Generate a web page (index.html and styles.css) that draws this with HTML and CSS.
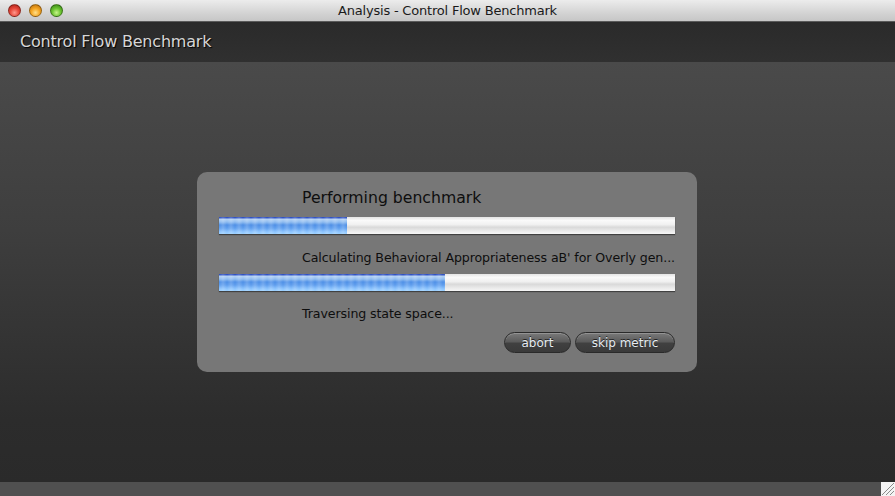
FILE: index.html
```html
<!DOCTYPE html>
<html>
<head>
<meta charset="utf-8">
<link rel="stylesheet" href="styles.css">
</head>
<body>
<div class="window">
  <div class="titlebar">
    <div class="lights">
      <span class="light red"></span>
      <span class="light orange"></span>
      <span class="light green"></span>
    </div>
    <div class="title">Analysis - Control Flow Benchmark</div>
  </div>
  <div class="header">Control Flow Benchmark</div>
  <div class="main">
    <div class="dialog">
      <div class="dlg-title">Performing benchmark</div>
      <div class="bar"><div class="fill" style="width:28%"></div></div>
      <div class="msg">Calculating Behavioral Appropriateness aB' for Overly gen...</div>
      <div class="bar"><div class="fill" style="width:49.6%"></div></div>
      <div class="msg msg2">Traversing state space...</div>
      <div class="buttons">
        <button class="btn btn-abort">abort</button>
        <button class="btn btn-skip">skip metric</button>
      </div>
    </div>
  </div>
  <div class="statusbar">
    <div class="grip">
      <svg width="14" height="14" viewBox="0 0 14 14">
        <path d="M13 5 L5 13 M13 9 L9 13 M13 1 L1 13" stroke="#8a8a8a" stroke-width="1" fill="none"/>
      </svg>
    </div>
  </div>
</div>
</body>
</html>
```
FILE: styles.css
```css
* { box-sizing: border-box; }
html, body { margin: 0; padding: 0; }
body {
  width: 895px;
  height: 496px;
  overflow: hidden;
  font-family: "DejaVu Sans", "Lucida Grande", sans-serif;
}
.window {
  display: flex;
  flex-direction: column;
  width: 895px;
  height: 496px;
}
.titlebar {
  height: 22px;
  flex: none;
  background: linear-gradient(#ececec, #d4d4d4 60%, #c6c6c6);
  border-bottom: 1px solid #5a5a5a;
  display: flex;
  align-items: center;
  position: relative;
}
.lights {
  display: flex;
  gap: 8px;
  padding-left: 8px;
  align-items: center;
}
.light {
  width: 13px;
  height: 13px;
  border-radius: 50%;
  display: block;
  border: 1px solid rgba(0,0,0,0.35);
}
.red { background: radial-gradient(circle at 50% 70%, #ff9a8e 0%, #e84a3c 45%, #a81c12 100%); }
.orange { background: radial-gradient(circle at 50% 70%, #ffe08a 0%, #f5a623 45%, #b86a08 100%); }
.green { background: radial-gradient(circle at 50% 70%, #c8f58a 0%, #6cc431 45%, #2f7c10 100%); }
.title {
  position: absolute;
  left: 0;
  right: 0;
  top: 0;
  height: 21px;
  line-height: 22px;
  text-align: center;
  font-size: 13px;
  color: #1a1a1a;
  letter-spacing: -0.2px;
}
.header {
  height: 40px;
  flex: none;
  background: linear-gradient(#2a2a2a, #303030);
  color: #d6d6d6;
  font-size: 16px;
  line-height: 40px;
  padding-left: 20px;
  text-shadow: 1px 1px 1px #000;
  letter-spacing: -0.2px;
}
.main {
  flex: 1;
  background: linear-gradient(#4a4a4a, #3e3e3e 40%, #2c2c2c 85%, #2a2a2a);
  display: flex;
  align-items: center;
  justify-content: flex-start;
  padding-left: 197px;
}
.dialog {
  width: 500px;
  height: 200px;
  background: #777777;
  border-radius: 10px;
  padding: 16px 22px 0 22px;
  display: flex;
  flex-direction: column;
}
.dlg-title {
  font-size: 15.7px;
  line-height: 20px;
  height: 20px;
  padding-left: 83px;
  color: #0e0e0e;
}
.bar {
  margin-top: 9px;
  height: 17px;
  background: linear-gradient(#e4e4e4 0%, #fafafa 20%, #f0f0f0 45%, #d9d9d9 60%, #ececec 85%, #f6f6f6 100%);
  box-shadow: 0 1px 1px rgba(0,0,0,0.45);
  position: relative;
  overflow: hidden;
}
.fill {
  height: 100%;
  background:
    repeating-linear-gradient(90deg, rgba(255,255,255,0.0) 0px, rgba(255,255,255,0.18) 4px, rgba(255,255,255,0.0) 8px),
    linear-gradient(#2e4fc0 0px, #2e4fc0 1px, #b4d2f4 2px, #8fbcf0 5px, #4d8fe6 8px, #5d9dee 11px, #8ec6ff 15px, #9ad0ff 17px);
}
.msg {
  margin-top: 16px;
  height: 16px;
  line-height: 16px;
  font-size: 12.6px;
  padding-left: 83px;
  color: #0e0e0e;
  white-space: nowrap;
  letter-spacing: -0.1px;
}
.msg + .bar { margin-top: 8px; }
.msg2 { margin-top: 15px; }
.buttons {
  margin-top: 10px;
  display: flex;
  justify-content: flex-end;
  gap: 4px;
}
.btn {
  height: 21px;
  border-radius: 11px;
  border: 1px solid #2a2a2a;
  background: linear-gradient(#7a7a7a 0%, #5c5c5c 45%, #404040 55%, #3a3a3a 100%);
  color: #e6ecf2;
  font-family: "DejaVu Sans", sans-serif;
  font-size: 12px;
  line-height: 20px;
  padding: 0;
  text-shadow: 0 -1px 0 #222;
  box-shadow: inset 0 1px 0 rgba(255,255,255,0.2);
}
.btn-abort { width: 67px; }
.btn-skip { width: 100px; }
.statusbar {
  height: 14px;
  flex: none;
  background: #505050;
  display: flex;
  justify-content: flex-end;
}
.grip {
  width: 14px;
  height: 14px;
  background: #f4f4f4;
  display: block;
}
.grip svg { display: block; }
```
